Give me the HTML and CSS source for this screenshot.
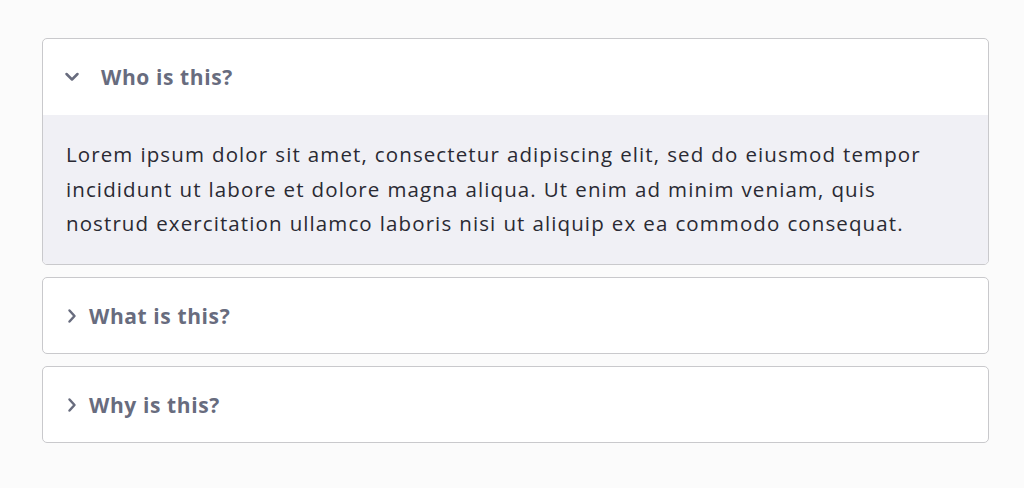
FILE: index.html
```html
<!DOCTYPE html>
<html>
<head>
<meta charset="utf-8">
<link rel="stylesheet" href="styles.css">
</head>
<body>
<div class="accordion">
  <div class="item open">
    <div class="head">
      <svg class="chev" viewBox="0 0 16 16" width="16" height="16"><path d="M2.5 5 L8 10.5 L13.5 5" fill="none" stroke="currentColor" stroke-width="2.5" stroke-linecap="round" stroke-linejoin="round"/></svg>
      <span class="title">Who is this?</span>
    </div>
    <div class="panel">Lorem ipsum dolor sit amet, consectetur adipiscing elit, sed do eiusmod tempor incididunt ut labore et dolore magna aliqua. Ut enim ad minim veniam, quis nostrud exercitation ullamco laboris nisi ut aliquip ex ea commodo consequat.</div>
  </div>
  <div class="item">
    <div class="head">
      <svg class="chev" viewBox="0 0 16 16" width="16" height="16"><path d="M5.5 2.5 L10.5 8 L5.5 13.5" fill="none" stroke="currentColor" stroke-width="2.5" stroke-linecap="round" stroke-linejoin="round"/></svg>
      <span class="title">What is this?</span>
    </div>
  </div>
  <div class="item">
    <div class="head">
      <svg class="chev" viewBox="0 0 16 16" width="16" height="16"><path d="M5.5 2.5 L10.5 8 L5.5 13.5" fill="none" stroke="currentColor" stroke-width="2.5" stroke-linecap="round" stroke-linejoin="round"/></svg>
      <span class="title">Why is this?</span>
    </div>
  </div>
</div>
</body>
</html>
```
FILE: styles.css
```css
html, body {
  margin: 0;
  padding: 0;
  background: #fbfbfb;
}
body {
  font-family: "Open Sans", "Noto Sans", sans-serif;
}
.accordion {
  display: flex;
  flex-direction: column;
  gap: 12px;
  margin: 38px 35px 0 42px;
  width: 947px;
}
.item {
  background: #ffffff;
  border: 1px solid #c9c9cc;
  border-radius: 5px;
  overflow: hidden;
}
.head {
  height: 75px;
  display: flex;
  align-items: center;
  gap: 9px;
  padding-left: 21px;
  padding-top: 1px;
  box-sizing: border-box;
  color: #686c7e;
}
.item.open .head {
  height: 76px;
  gap: 21px;
  padding-top: 0;
}
.chev {
  flex: none;
}
.title {
  font-size: 21px;
  font-weight: 700;
  letter-spacing: 0.6px;
}
.panel {
  background: #f0f0f5;
  padding: 22px 40px 23px 23px;
  font-size: 20.5px;
  line-height: 34.5px;
  letter-spacing: 1.1px;
  word-spacing: 0.6px;
  color: #2a2a33;
}
```
